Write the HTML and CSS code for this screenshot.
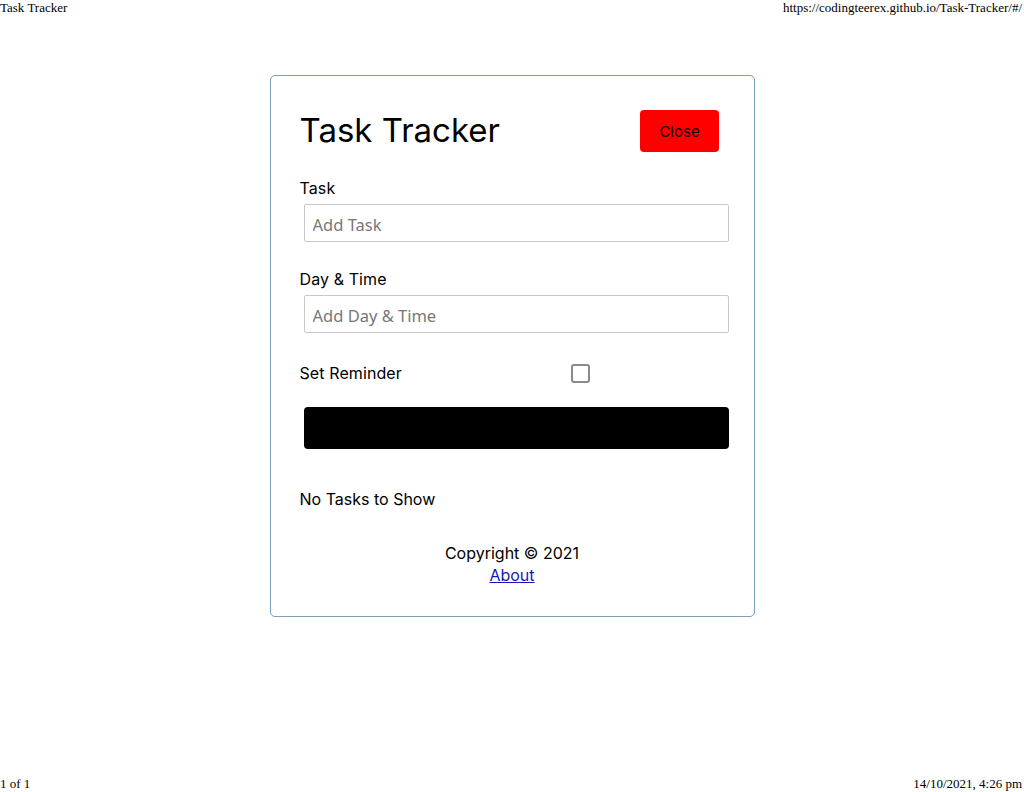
FILE: index.html
```html
<!DOCTYPE html>
<html lang="en">
<head>
<meta charset="utf-8">
<title>Task Tracker</title>
<link rel="stylesheet" href="styles.css">
</head>
<body>
<div class="print-bar print-top">
  <span>Task Tracker</span>
  <span>https://codingteerex.github.io/Task-Tracker/#/</span>
</div>
<main class="page">
  <div class="card">
    <header class="header">
      <h1 class="title">Task Tracker</h1>
      <button class="btn btn-close" type="button">Close</button>
    </header>
    <form class="add-form">
      <div class="form-control">
        <label class="label">Task</label>
        <input class="text-input" type="text" placeholder="Add Task">
      </div>
      <div class="form-control">
        <label class="label">Day &amp; Time</label>
        <input class="text-input" type="text" placeholder="Add Day &amp; Time">
      </div>
      <div class="form-control form-check">
        <label class="label">Set Reminder</label>
        <span class="check-cell"><input class="checkbox" type="checkbox"></span>
      </div>
      <button class="btn btn-block" type="button"></button>
    </form>
    <p class="empty">No Tasks to Show</p>
    <footer class="footer">
      <p class="copy">Copyright © 2021</p>
      <a class="about" href="#">About</a>
    </footer>
  </div>
</main>
<div class="print-bar print-bottom">
  <span>1 of 1</span>
  <span>14/10/2021, 4:26 pm</span>
</div>
</body>
</html>
```

FILE: styles.css
```css
* {
  box-sizing: border-box;
}

html, body {
  margin: 0;
  padding: 0;
  background: #ffffff;
}

body {
  min-height: 792px;
  display: flex;
  flex-direction: column;
  font-family: "Inter", "Noto Sans", sans-serif;
  color: #000;
}

.print-bar {
  display: flex;
  justify-content: space-between;
  font-family: "Liberation Serif", serif;
  font-size: 13px;
  line-height: 16px;
  height: 16px;
  padding-right: 2px;
  color: #000;
}

.print-bottom {
  margin-top: auto;
}

.page {
  padding-top: 59px;
}

.card {
  width: 485px;
  margin: 0 auto;
  border: 1px solid #7b9fb9;
  border-radius: 5px;
  padding: 29px;
}

.header {
  display: flex;
  justify-content: space-between;
  align-items: center;
}

.title {
  margin: 0;
  font-size: 33px;
  font-weight: 400;
  line-height: 50px;
}

.btn {
  border: none;
  border-radius: 4px;
  cursor: pointer;
  font-family: inherit;
}

.btn-close {
  width: 79px;
  height: 42px;
  margin: 5px 5.5px 3px 4px;
  background: #ff0000;
  color: #1a0000;
  font-size: 15px;
}

.add-form {
  margin: 0;
}

.form-control {
  display: flow-root;
  margin: 22px 0;
}

.label {
  display: block;
  font-size: 16px;
  line-height: 22px;
  letter-spacing: 0.1px;
}

.text-input {
  display: block;
  width: 425px;
  height: 38px;
  margin: 5px 0 4px 4px;
  padding: 2px 8px 0;
  border: 1px solid #c9c9c9;
  border-radius: 2px;
  font-family: "Noto Sans", sans-serif;
  font-size: 16.5px;
  color: #000;
}

.text-input::placeholder {
  color: #777;
}

.form-check {
  display: grid;
  grid-template-columns: 1fr 2fr;
  align-items: center;
  height: 28px;
  margin-bottom: 20px;
}

.check-cell {
  display: flex;
  justify-content: center;
  padding-right: 5px;
}

.checkbox {
  appearance: none;
  -webkit-appearance: none;
  width: 19px;
  height: 19px;
  margin: 0;
  border: 2px solid #8a8a8a;
  border-radius: 3px;
  background: #fff;
}

.btn-block {
  display: block;
  width: 425px;
  height: 42px;
  margin: 0 0 0 4px;
  background: #000;
}

.empty {
  margin: 39px 0 0;
  font-size: 16px;
  line-height: 22px;
}

.footer {
  margin-top: 32px;
  text-align: center;
  font-size: 16px;
}

.copy {
  margin: 0;
  line-height: 22px;
}

.about {
  display: inline-block;
  line-height: 23px;
  color: #1717b0;
  text-decoration: underline;
}
```
